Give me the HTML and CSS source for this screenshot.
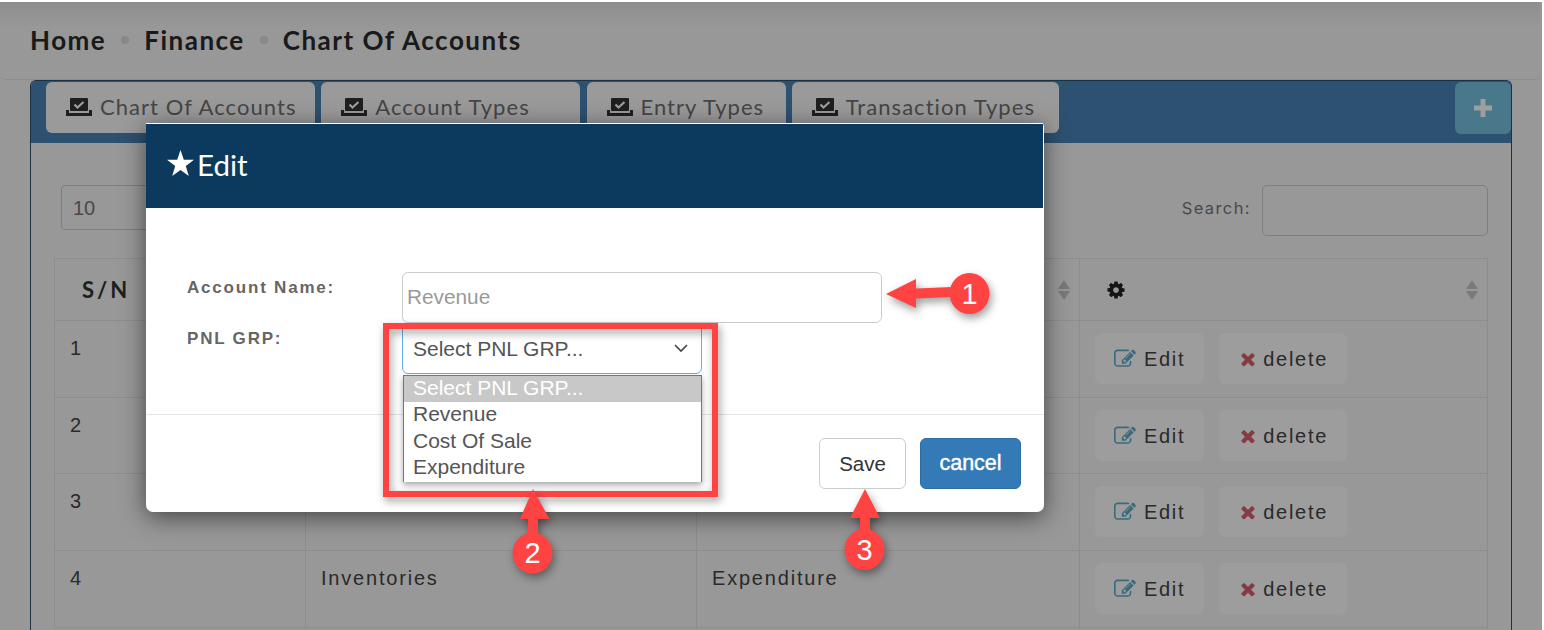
FILE: index.html
```html
<!DOCTYPE html>
<html lang="en">

<head>
    <meta charset="UTF-8">
    <meta name="viewport" content="width=device-width, initial-scale=1.0">
    <title>Chart Of Accounts</title>
    <link rel="stylesheet" href="styles.css">
</head>

<body>
    <!-- Icon set -->
    <svg class="defs" width="0" height="0">
        <symbol id="i-tray" viewBox="0 0 26 18">
            <rect x="4" y="0" width="18" height="13" rx="1"/>
            <path d="M0 12h3v3h20v-3h3v6H0z"/>
            <path d="M8.5 6.5l3 3 6-5.5" fill="none" stroke="#fff" stroke-width="2.2"/>
        </symbol>
        <symbol id="i-edit" viewBox="0 0 1792 1792">
            <path d="M888 1184l116-116-152-152-116 116v56h96v96h56zm440-720q-16-16-33 1l-350 350q-17 17-1 33t33-1l350-350q17-17 1-33zm80 594v190q0 119-84.5 203.5t-203.5 84.5h-832q-119 0-203.5-84.5t-84.5-203.5v-832q0-119 84.5-203.5t203.5-84.5h832q63 0 117 25 15 7 18 23 3 17-9 29l-49 49q-14 14-32 8-23-6-45-6h-832q-66 0-113 47t-47 113v832q0 66 47 113t113 47h832q66 0 113-47t47-113v-126q0-13 9-22l64-64q15-15 35-7t20 29zm-96-738l288 288-672 672h-288v-288zm444 132l-92 92-288-288 92-92q28-28 68-28t68 28l152 152q28 28 28 68t-28 68z"/>
        </symbol>
        <symbol id="i-times" viewBox="0 0 1792 1792">
            <path d="M1490 1322q0 40-28 68l-136 136q-28 28-68 28t-68-28l-294-294-294 294q-28 28-68 28t-68-28l-136-136q-28-28-28-68t28-68l294-294-294-294q-28-28-28-68t28-68l136-136q28-28 68-28t68 28l294 294 294-294q28-28 68-28t68 28l136 136q28 28 28 68t-28 68l-294 294 294 294q28 28 28 68z"/>
        </symbol>
        <symbol id="i-sort" viewBox="0 0 12 20">
            <path d="M6 0l6 9H0z"/>
            <path d="M6 20l6-9H0z"/>
        </symbol>
    </svg>

    <div class="screen">
        <header class="topbar">
            <span>Home</span>
            <i class="dot"></i>
            <span>Finance</span>
            <i class="dot"></i>
            <span>Chart Of Accounts</span>
        </header>

        <section class="card">
            <div class="card-head">
                <a class="tab"><svg class="tab-icon"><use href="#i-tray"/></svg>Chart Of Accounts</a>
                <a class="tab"><svg class="tab-icon"><use href="#i-tray"/></svg>Account Types</a>
                <a class="tab"><svg class="tab-icon"><use href="#i-tray"/></svg>Entry Types</a>
                <a class="tab"><svg class="tab-icon"><use href="#i-tray"/></svg>Transaction Types</a>
                <a class="add-btn">
                    <svg width="18" height="18" viewBox="0 0 18 18"><path d="M6.5 0h5v6.5H18v5h-6.5V18h-5v-6.5H0v-5h6.5z"/></svg>
                </a>
            </div>

            <div class="card-body">
                <div class="controls">
                    <div class="length">10</div>
                    <label class="search"><span>Search:</span> <input type="text"></label>
                </div>

                <table class="grid">
                    <colgroup>
                        <col class="col-sn">
                        <col class="col-name">
                        <col class="col-type">
                        <col>
                    </colgroup>
                    <thead>
                        <tr>
                            <th>S/N</th>
                            <th></th>
                            <th><span class="th-in"><span></span><svg class="sort"><use href="#i-sort"/></svg></span></th>
                            <th>
                                <span class="th-in">
                                    <svg class="gear" viewBox="0 0 1792 1792"><path d="M1152 896q0-106-75-181t-181-75-181 75-75 181 75 181 181 75 181-75 75-181zm512-109v222q0 12-8 23t-20 13l-185 28q-19 54-39 91 35 50 107 138 10 12 10 25t-9 23q-27 37-99 108t-94 71q-12 0-26-9l-138-108q-44 23-91 38-16 136-29 186-7 28-36 28h-222q-14 0-24.5-8.5t-11.5-21.5l-28-184q-49-16-90-37l-141 107q-10 9-25 9-14 0-25-11-126-114-165-168-7-10-7-23 0-12 8-23 15-21 51-66.5t54-70.5q-27-50-41-99l-183-27q-13-2-21-12.5t-8-23.5v-222q0-12 8-23t19-13l186-28q14-46 39-92-40-57-107-138-10-12-10-24 0-10 9-23 26-36 98.5-107.5t94.5-71.5q13 0 26 10l138 107q44-23 91-38 16-136 29-186 7-28 36-28h222q14 0 24.5 8.5t11.5 21.5l28 184q49 16 90 37l142-107q9-9 24-9 13 0 25 10 129 119 165 170 7 8 7 22 0 12-8 23-15 21-51 66.5t-54 70.5q26 50 41 98l183 28q13 2 21 12.5t8 23.5z"/></svg>
                                    <svg class="sort"><use href="#i-sort"/></svg>
                                </span>
                            </th>
                        </tr>
                    </thead>
                    <tbody>
                        <!-- name and type of rows 1-2 sit behind the dialog -->
                        <tr>
                            <td>1</td>
                            <td></td>
                            <td></td>
                            <td class="actions"><a class="act"><svg class="act-edit"><use href="#i-edit"/></svg>Edit</a><a class="act"><svg class="act-del"><use href="#i-times"/></svg>delete</a></td>
                        </tr>
                        <tr class="row-short">
                            <td>2</td>
                            <td></td>
                            <td></td>
                            <td class="actions"><a class="act"><svg class="act-edit"><use href="#i-edit"/></svg>Edit</a><a class="act"><svg class="act-del"><use href="#i-times"/></svg>delete</a></td>
                        </tr>
                        <tr>
                            <td>3</td>
                            <td>Property, Plant &amp; Equipment</td>
                            <td>Expenditure</td>
                            <td class="actions"><a class="act"><svg class="act-edit"><use href="#i-edit"/></svg>Edit</a><a class="act"><svg class="act-del"><use href="#i-times"/></svg>delete</a></td>
                        </tr>
                        <tr>
                            <td>4</td>
                            <td>Inventories</td>
                            <td>Expenditure</td>
                            <td class="actions"><a class="act"><svg class="act-edit"><use href="#i-edit"/></svg>Edit</a><a class="act"><svg class="act-del"><use href="#i-times"/></svg>delete</a></td>
                        </tr>
                    </tbody>
                </table>
            </div>
        </section>
    </div>

    <div class="backdrop"></div>

    <div class="modal">
        <div class="modal-head">
            <svg class="star" viewBox="0 0 27 26"><path d="M13.5 0l3.3 9.7H27l-8.2 6.2 3 10-8.3-6-8.3 6 3-10L0 9.7h10.2z"/></svg>Edit
        </div>
        <div class="modal-body">
            <div class="form-row">
                <label>Account Name:</label>
                <input class="name-input" type="text" placeholder="Revenue">
            </div>
            <div class="form-row">
                <label>PNL GRP:</label>
                <div class="select">
                    <span>Select PNL GRP...</span>
                    <svg width="14" height="9" viewBox="0 0 14 9"><path d="M1 1l6 6 6-6" fill="none" stroke="#444" stroke-width="1.6"/></svg>
                    <ul class="select-list">
                        <li class="picked">Select PNL GRP...</li>
                        <li>Revenue</li>
                        <li>Cost Of Sale</li>
                        <li>Expenditure</li>
                    </ul>
                </div>
            </div>
        </div>
        <div class="modal-foot">
            <button class="btn-save">Save</button>
            <button class="btn-cancel">cancel</button>
        </div>
    </div>

    <!-- Callouts drawn on top of the screenshot -->
    <svg class="callouts" width="1544" height="630" viewBox="0 0 1544 630">
        <g class="mark">
            <rect x="386" y="326" width="329" height="168" fill="none" stroke="#ff4343" stroke-width="6"/>
        </g>
        <g class="mark">
            <path d="M886 294l30-15v9.5l36-1.500v10l-36 1.500V308z"/>
            <ellipse cx="969.5" cy="293.5" rx="20" ry="20.5"/>
        </g>
        <g class="mark">
            <path d="M533 489l16.5 30H538v16h-10v-16h-8z"/>
            <ellipse cx="532.5" cy="553" rx="20" ry="20.5"/>
        </g>
        <g class="mark">
            <path d="M865 489l15 29h-10v14h-10v-14h-10z"/>
            <ellipse cx="864.5" cy="549.5" rx="20" ry="20.5"/>
        </g>
        <text x="969.5" y="304">1</text>
        <text x="532.5" y="563">2</text>
        <text x="864.5" y="560">3</text>
    </svg>
</body>

</html>
```

FILE: styles.css
```css
* {
    box-sizing: border-box;
}

html,
body {
    margin: 0;
    height: 630px;
    overflow: hidden;
    background-color: #fff;
}

body {
    position: relative;
    font-family: "Liberation Sans", Arial, sans-serif;
}

.defs {
    position: absolute;
}

.screen {
    display: flex;
    flex-direction: column;
    height: 628px;
    margin: 2px 2px 0 0;
    background-color: #f5f5f5;
    overflow: hidden;
}

.backdrop {
    position: absolute;
    top: 2px;
    left: 0;
    right: 2px;
    bottom: 0;
    background-color: rgba(0, 0, 0, 0.38);
}

/* top breadcrumb */
.topbar {
    flex: none;
    display: flex;
    align-items: center;
    height: 78px;
    width: 1540px;
    padding-left: 30px;
    padding-bottom: 2px;
    border-bottom: 1px solid #e4e4e4;
    border-radius: 0 0 6px 6px;
    background: linear-gradient(#e6e6e6, #f5f5f5 25px);
    font-family: Lato, sans-serif;
    font-weight: 700;
    font-size: 26px;
    letter-spacing: 1.5px;
    color: #2a2a2a;
}

.dot {
    width: 8px;
    height: 8px;
    margin: 0 15px;
    border-radius: 50%;
    background-color: #dcdcdc;
}

/* card with tabs */
.card {
    flex: 1;
    margin: 0 30px 0 30px;
    border: 1px solid #2c4f6f;
    border-bottom: none;
    border-radius: 6px 6px 0 0;
    overflow: hidden;
}

.card-head {
    display: grid;
    grid-template-columns: 269px 259px 199px 267px 1fr;
    align-items: start;
    gap: 6.25px;
    height: 62px;
    padding: 1px 0 0 15px;
    background-color: #4a84b5;
}

.tab {
    display: flex;
    align-items: center;
    height: 51px;
    padding: 0 0 2px 20px;
    border-radius: 6px;
    background-color: #f9f9f9;
    font-family: Lato, sans-serif;
    font-size: 22px;
    letter-spacing: 1.05px;
    color: #717171;
}

.tab-icon {
    width: 26px;
    height: 18px;
    margin-right: 8px;
    fill: #333;
}

.add-btn {
    display: flex;
    align-items: center;
    justify-content: center;
    width: 56px;
    height: 52px;
    justify-self: end;
    border-radius: 6px;
    background-color: #75c2dd;
    fill: #fff;
}

.card-body {
    padding: 42px 23px 0 23px;
    background-color: #f5f5f5;
}

.controls {
    display: flex;
    justify-content: space-between;
    align-items: flex-start;
    padding-left: 7px;
    height: 73px;
}

.length {
    width: 130px;
    height: 45px;
    padding: 11px;
    border: 1px solid #ccc;
    border-radius: 4px;
    font-size: 20px;
    color: #777;
}

.search {
    display: flex;
    align-items: center;
    gap: 11px;
    font-family: Inter, sans-serif;
    font-size: 16.5px;
    letter-spacing: 1.4px;
    color: #777;
}

.search span {
    margin-bottom: 5px;
}

.search input {
    width: 226px;
    height: 51px;
    border: 1px solid #ccc;
    border-radius: 5px;
    background: transparent;
}

/* table */
.grid {
    width: 100%;
    table-layout: fixed;
    border-collapse: collapse;
    font-size: 20px;
    letter-spacing: 1.8px;
    color: #444;
}

.col-sn {
    width: 251px;
}

.col-name {
    width: 391px;
}

.col-type {
    width: 383px;
}

.grid th,
.grid td {
    border: 1px solid #e4e4e4;
    text-align: left;
    vertical-align: top;
}

.grid th {
    height: 62px;
    padding: 0 9px 0 26px;
    vertical-align: middle;
    font-family: Lato, sans-serif;
    font-size: 22px;
    font-weight: 700;
    letter-spacing: 3px;
    color: #333;
}

.grid th:first-child {
    padding-left: 27px;
}

.th-in {
    display: flex;
    align-items: center;
    justify-content: space-between;
}

.sort {
    width: 12px;
    height: 20px;
    fill: #c4c4c4;
}

.gear {
    width: 20px;
    height: 20px;
    fill: #222;
}

.grid td {
    height: 77px;
    padding: 16px 15px;
    line-height: 22px;
}

.grid .row-short td {
    height: 76px;
}

.grid td.actions {
    padding: 12px 15px;
}

.actions {
    white-space: nowrap;
}

.act {
    display: inline-flex;
    align-items: center;
    vertical-align: top;
    height: 51px;
    padding: 0 19px;
    margin-right: 15px;
    border-radius: 6px;
    background-color: #fdfdfd;
    font-size: 20px;
    letter-spacing: 1.7px;
}

.act:last-child {
    margin-right: 0;
}

.act-edit {
    width: 22px;
    height: 22px;
    margin-right: 8px;
    fill: #5bacc9;
}

.act-del {
    width: 20px;
    height: 20px;
    margin-right: 5px;
    fill: #d9606e;
}

/* edit dialog */
.modal {
    position: absolute;
    top: 123px;
    left: 146px;
    width: 898px;
    height: 389px;
    border-radius: 4px 4px 7px 7px;
    background-color: #fff;
    box-shadow: 0 5px 25px rgba(0, 0, 0, 0.55);
}

.modal-head {
    display: flex;
    align-items: center;
    height: 85px;
    margin-right: 1px;
    padding: 0 0 3px 21px;
    border-top: 1px solid #fff;
    background-color: #0b3a5e;
    font-family: Lato, sans-serif;
    font-size: 29.5px;
    color: #fff;
}

.star {
    width: 27px;
    height: 26px;
    margin-right: 3px;
    margin-top: -4px;
    fill: #fff;
}

.modal-body {
    height: 207px;
    padding: 64px 0 0 41px;
    border-bottom: 1px solid #e5e5e5;
}

.form-row {
    display: flex;
    height: 51px;
}

.form-row label {
    flex: none;
    width: 215px;
    padding-top: 6px;
    font-size: 17px;
    font-weight: 700;
    letter-spacing: 1.8px;
    color: #666;
}

.name-input {
    width: 480px;
    height: 51px;
    padding: 0 4px 2px;
    border: 1px solid #ccc;
    border-radius: 6px;
    font-family: inherit;
    font-size: 20.8px;
}

.name-input::placeholder {
    color: #999;
}

.select {
    position: relative;
    display: flex;
    align-items: center;
    justify-content: space-between;
    width: 300px;
    height: 51px;
    padding: 0 13px 0 10px;
    border: 1px solid #66afe9;
    border-radius: 0 0 6px 6px;
    font-size: 21px;
    color: #555;
}

.select-list {
    position: absolute;
    top: 51px;
    left: 0;
    width: 299px;
    margin: 0;
    padding: 0 0 1px;
    list-style: none;
    border: 1px solid #767676;
    border-bottom: none;
    background-color: #fff;
    box-shadow: 0 3px 6px rgba(0, 0, 0, 0.35);
}

.select-list li {
    height: 26.3px;
    padding-left: 9px;
    line-height: 24px;
}

.select-list .picked {
    background-color: #c8c8c8;
    color: #fff;
}

.modal-foot {
    display: flex;
    justify-content: flex-end;
    gap: 14px;
    padding: 23px 23px 0 0;
}

.modal-foot button {
    height: 51px;
    border: 1px solid #ccc;
    border-radius: 6px;
    font-family: inherit;
    font-size: 20.5px;
    background-color: #fff;
    color: #333;
}

.modal-foot .btn-save {
    width: 87px;
}

.modal-foot .btn-cancel {
    width: 101px;
    border-color: #2e6da4;
    background-color: #337ab7;
    color: #fff;
    font-size: 21.5px;
    -webkit-text-stroke: 0.4px #fff;
}

/* numbered callouts */
.callouts {
    position: absolute;
    top: 0;
    left: 0;
    pointer-events: none;
}

.mark {
    fill: #ff4343;
    filter: drop-shadow(2px 4px 4px rgba(0, 0, 0, 0.4));
}

.callouts text {
    font-family: "Liberation Sans", Arial, sans-serif;
    font-size: 29px;
    fill: #fff;
    text-anchor: middle;
}
```
